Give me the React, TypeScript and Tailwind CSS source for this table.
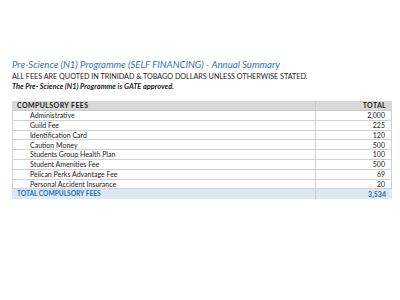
const fees: [string, string][] = [
  ["Administrative", "2,000"],
  ["Guild Fee", "225"],
  ["Identification Card", "120"],
  ["Caution Money", "500"],
  ["Students Group Health Plan", "100"],
  ["Student Amenities Fee", "500"],
  ["Pelican Perks Advantage Fee", "69"],
  ["Personal Accident Insurance", "20"],
]

export default function App() {
  return (
    <div className="w-[400px] h-[300px] bg-white overflow-hidden pt-[58px] pl-[12px] text-[#222]" style={{ fontFamily: "Lato, 'Open Sans', sans-serif" }}>
      <h1 className="italic text-[9.6px] leading-[14px] text-[#2e75b6]">
        Pre-Science (N1) Programme (SELF FINANCING) - Annual Summary
      </h1>
      <p className="text-[7.2px] leading-[10px]">
        ALL FEES ARE QUOTED IN TRINIDAD &amp; TOBAGO DOLLARS UNLESS OTHERWISE STATED.
      </p>
      <p className="text-[7.4px] leading-[10px] font-bold italic">
        The Pre- Science (N1) Programme is GATE approved.
      </p>

      <div className="mt-[9px] w-[380px] text-[7px]">
        <div className="flex h-[10px] items-center bg-[#d9d9d9] font-bold border-b border-[#c8c8c8]">
          <div className="flex-1 pl-[5px] tracking-[0.4px]">COMPULSORY FEES</div>
          <div className="w-[77px] h-full flex items-center justify-end pr-[6px] border-l border-[#c8c8c8] tracking-[0.3px]">TOTAL</div>
        </div>
        {fees.map(([name, amount]) => (
          <div key={name} className="flex h-[9.8px] items-center border-b border-l border-[#d0d0d0]">
            <div className="flex-1 pl-[17px]">{name}</div>
            <div className="w-[77px] h-full flex items-center justify-end pr-[6px] border-l border-r border-[#d0d0d0]">{amount}</div>
          </div>
        ))}
        <div className="flex h-[10px] items-center bg-[#dde8f4] font-bold text-[#2370b8]">
          <div className="flex-1 pl-[5px] text-[6.6px]">TOTAL COMPULSORY FEES</div>
          <div className="w-[77px] h-full flex items-center justify-end pr-[6px] border-l border-[#c8c8c8]">3,534</div>
        </div>
      </div>
    </div>
  )
}
